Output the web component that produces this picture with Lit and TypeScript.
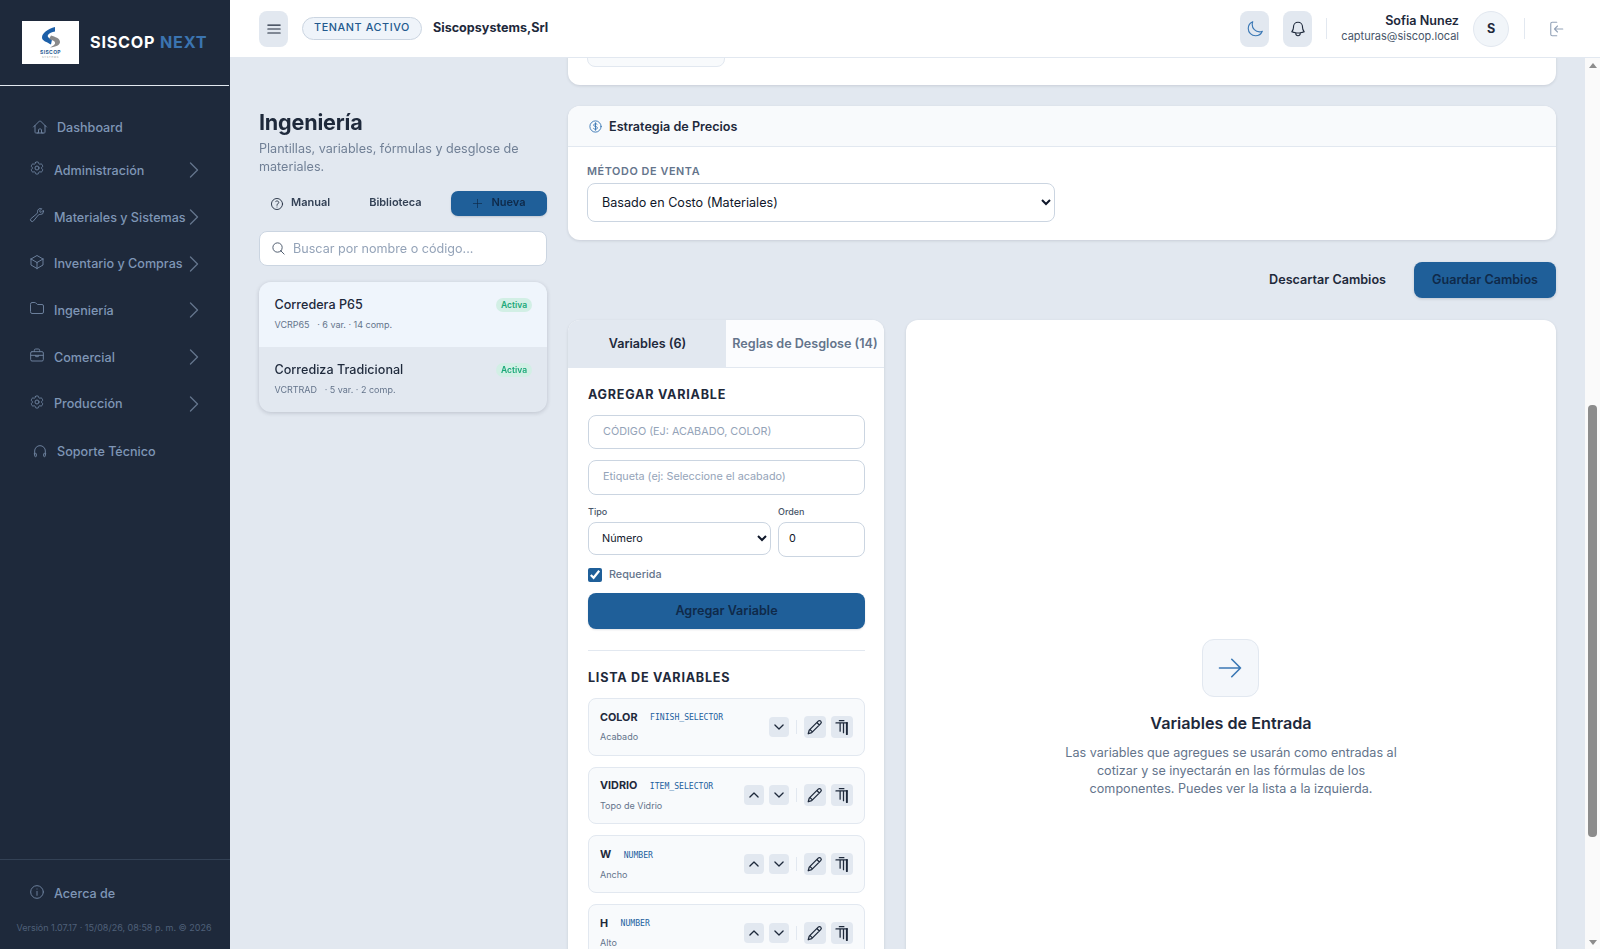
import { LitElement, html, css, svg } from "lit";
import { customElement } from "lit/decorators.js";

const ic = (d: unknown, cls = "") => html`<svg class=${cls} viewBox="0 0 24 24" fill="none" stroke="currentColor" stroke-width="1.5" stroke-linecap="round" stroke-linejoin="round">${d}</svg>`;
const P = {
  home: svg`<path d="M2.25 12l8.954-8.955c.44-.439 1.152-.439 1.591 0L21.75 12M4.5 9.75v10.125c0 .621.504 1.125 1.125 1.125H9.75v-4.875c0-.621.504-1.125 1.125-1.125h2.25c.621 0 1.125.504 1.125 1.125V21h4.125c.621 0 1.125-.504 1.125-1.125V9.75M8.25 21h8.25"/>`,
  cog: svg`<path d="M9.594 3.94c.09-.542.56-.94 1.11-.94h2.593c.55 0 1.02.398 1.11.94l.213 1.281c.063.374.313.686.645.87.074.04.147.083.22.127.324.196.72.257 1.075.124l1.217-.456a1.125 1.125 0 011.37.49l1.296 2.247a1.125 1.125 0 01-.26 1.431l-1.003.827c-.293.24-.438.613-.431.992a6.759 6.759 0 010 .255c-.007.378.138.75.43.99l1.005.828c.424.35.534.954.26 1.43l-1.298 2.247a1.125 1.125 0 01-1.369.491l-1.217-.456c-.355-.133-.75-.072-1.076.124a6.57 6.57 0 01-.22.128c-.331.183-.581.495-.644.869l-.213 1.28c-.09.543-.56.941-1.11.941h-2.594c-.55 0-1.02-.398-1.11-.94l-.213-1.281c-.062-.374-.312-.686-.644-.87a6.52 6.52 0 01-.22-.127c-.325-.196-.72-.257-1.076-.124l-1.217.456a1.125 1.125 0 01-1.369-.49l-1.297-2.247a1.125 1.125 0 01.26-1.431l1.004-.827c.292-.24.437-.613.43-.992a6.932 6.932 0 010-.255c.007-.378-.138-.75-.43-.99l-1.004-.828a1.125 1.125 0 01-.26-1.43l1.297-2.247a1.125 1.125 0 011.37-.491l1.216.456c.356.133.751.072 1.076-.124.072-.044.146-.087.22-.128.332-.183.582-.495.644-.869l.214-1.281z"/><path d="M15 12a3 3 0 11-6 0 3 3 0 016 0z"/>`,
  wrench: svg`<path d="M21.75 6.75a4.5 4.5 0 01-4.884 4.484c-1.076-.091-2.264.071-2.95.904l-7.152 8.684a2.548 2.548 0 11-3.586-3.586l8.684-7.152c.833-.686.995-1.874.904-2.95a4.5 4.5 0 016.336-4.486l-3.276 3.276a3.004 3.004 0 002.25 2.25l3.276-3.276c.256.565.398 1.192.398 1.852z"/>`,
  cube: svg`<path d="M21 7.5l-9-5.25L3 7.5m18 0l-9 5.25m9-5.25v9l-9 5.25M3 7.5l9 5.25M3 7.5v9l9 5.25m0-9v9"/>`,
  folder: svg`<path d="M2.25 6A2.25 2.25 0 014.5 3.75h4.38a1.5 1.5 0 011.06.44l2.12 2.12a1.5 1.5 0 001.06.44h6.38a2.25 2.25 0 012.25 2.25v9a2.25 2.25 0 01-2.25 2.25h-15A2.25 2.25 0 012.25 18z"/>`,
  brief: svg`<rect x="2.5" y="7" width="19" height="14" rx="2"/><path d="M8 7V5a2 2 0 012-2h4a2 2 0 012 2v2M2.5 12.5h19M10 12.5v2h4v-2"/>`,
  head: svg`<path d="M4 18v-6a8 8 0 0116 0v6"/><path d="M4 15.5h1.5a1 1 0 011 1v3a1 1 0 01-1 1H5a1 1 0 01-1-1zM20 15.5h-1.5a1 1 0 00-1 1v3a1 1 0 001 1h.5a1 1 0 001-1z"/>`,
  info: svg`<circle cx="12" cy="12" r="9.5"/><path d="M12 17v-6M12 7.5h.01"/>`,
  moon: svg`<path d="M21.752 15.002A9.718 9.718 0 0118 15.75c-5.385 0-9.75-4.365-9.75-9.75 0-1.33.266-2.597.748-3.752A9.753 9.753 0 003 11.25C3 16.635 7.365 21 12.75 21a9.753 9.753 0 009.002-5.998z"/>`,
  bell: svg`<path d="M14.857 17.082a23.848 23.848 0 005.454-1.31A8.967 8.967 0 0118 9.75V9A6 6 0 006 9v.75a8.967 8.967 0 01-2.312 6.022c1.733.64 3.56 1.085 5.455 1.31m5.714 0a24.255 24.255 0 01-5.714 0m5.714 0a3 3 0 11-5.714 0"/>`,
  logout: svg`<path d="M13 3H7a2 2 0 00-2 2v14a2 2 0 002 2h6M21 12H10M14 8l-4 4 4 4"/>`,
  help: svg`<circle cx="12" cy="12" r="9.5"/><path d="M9.879 7.519c1.171-1.025 3.071-1.025 4.242 0 1.172 1.025 1.172 2.687 0 3.712-.203.179-.43.326-.67.442-.745.361-1.45.999-1.45 1.827v.75M12 17.25h.008"/>`,
  search: svg`<path d="M21 21l-5.197-5.197m0 0A7.5 7.5 0 105.196 5.196a7.5 7.5 0 0010.607 10.607z"/>`,
  plus: svg`<path d="M12 3v18M3 12h18"/>`,
  dollar: svg`<path d="M12 6v12m-3-2.818l.879.659c1.171.879 3.07.879 4.242 0 1.172-.879 1.172-2.303 0-3.182C13.536 12.219 12.768 12 12 12c-.725 0-1.45-.22-2.003-.659-1.106-.879-1.106-2.303 0-3.182s2.9-.879 4.006 0l.415.33M21 12a9 9 0 11-18 0 9 9 0 0118 0z"/>`,
  menu: svg`<path d="M3.75 6.75h16.5M3.75 12h16.5M3.75 17.25h16.5"/>`,
  arrow: svg`<path d="M13.5 4.5L21 12m0 0l-7.5 7.5M21 12H3"/>`,
  up: svg`<path d="M5 15.5l7-7 7 7"/>`,
  down: svg`<path d="M5 8.5l7 7 7-7"/>`,
  pencil: svg`<path d="M16.3 4.2a2.3 2.3 0 013.3 3.3L7.6 19.5 3 21l1.3-4.8zM14.5 6l3.3 3.3M5.500 15.5l3 3"/>`,
  trash: svg`<path d="M4 6.5h15M8.5 3.5h6M9.500 6.5v11M14 6.5v13"/><path d="M18.5 6.5v15" stroke-width="2.6"/>`,
};

const groups = [
  ["Administración", P.cog],
  ["Materiales y Sistemas", P.wrench],
  ["Inventario y Compras", P.cube],
  ["Ingeniería", P.folder],
  ["Comercial", P.brief],
  ["Producción", P.cog],
];

const vars = [
  { n: "COLOR", t: "FINISH_SELECTOR", l: "Acabado", first: true },
  { n: "VIDRIO", t: "ITEM_SELECTOR", l: "Topo de Vidrio" },
  { n: "W", t: "NUMBER", l: "Ancho" },
  { n: "H", t: "NUMBER", l: "Alto" },
];

@customElement("app-root")
export class AppRoot extends LitElement {
  static styles = css`
    :host { display: flex; height: 100vh; overflow: hidden; font-family: Inter, "Noto Sans", sans-serif; color: #1e293b; background: #e2e8f0; }
    * { box-sizing: border-box; }
    svg { display: block; flex: none; }
    button { font-family: inherit; border: 0; cursor: pointer; padding: 0; }
    input, select { font-family: inherit; }

    .side { width: 230px; flex: none; background: #1e293b; display: flex; flex-direction: column; color: #7f96b6; }
    .brand { height: 86px; flex: none; border-bottom: 1px solid #e2e8f0; display: flex; align-items: center; gap: 11px; padding: 0 0 1px 22px; margin-right: 1px; }
    .logo { width: 57px; height: 43px; background: #fff; }
    .bname { font-size: 16.2px; font-weight: 700; letter-spacing: .78px; color: #fff; white-space: nowrap; }
    .bname span { color: #3b74b0; }
    nav { padding-top: 21px; flex: 1; display: flex; flex-direction: column; }
    .link, .grp { display: flex; align-items: center; font-size: 12.6px; font-weight: 500; white-space: nowrap; }
    .link { height: 40px; padding-left: 32px; gap: 9px; }
    .link svg { width: 16px; height: 16px; color: #6b7f9b; }
    .link.sup { margin-top: 4px; }
    .grp { height: 46.7px; padding-left: 28.500px; }
    .grp > svg:first-child { width: 16px; height: 16px; color: #6b7f9b; margin: 0 9.500px 4px 0; }
    .grp .lbl { width: 135px; }
    .chev { width: 10px; height: 16px; color: #64748b; }
    .foot { border-top: 1px solid #334155; height: 90px; flex: none; display: flex; flex-direction: column; }
    .foot .grp { height: 33px; margin-top: 16.500px; }
    .foot .grp > svg:first-child { margin-bottom: 2px; }
    .ver { font-size: 9px; color: #4f6079; padding: 12px 0 0 16.500px; white-space: nowrap; }

    .right { flex: 1; min-width: 0; display: flex; flex-direction: column; position: relative; }
    .top { height: 58px; flex: none; background: #fff; border-bottom: 1px solid #e2e8f0; display: flex; align-items: center; padding: 0 0 0 29px; }
    .tb { width: 29px; height: 36px; border-radius: 8px; background: #e2e8f0; display: flex; align-items: center; justify-content: center; color: #1e293b; }
    .tb svg { width: 18px; height: 18px; }
    .tb.moon { color: #3b78b5; margin-left: auto; }
    .tb.bell { margin-left: 14px; }
    .badge { margin-left: 14px; width: 120px; height: 23px; padding-bottom: 2px; border-radius: 12px; border: 1px solid #cbd5e1; background: #eff4fa; color: #22598e; font-size: 10.8px; font-weight: 500; letter-spacing: .6px; display: flex; align-items: center; justify-content: center; }
    .tenant { margin-left: 11px; padding-bottom: 2px; font-size: 12.6px; font-weight: 700; }
    .vd { width: 1px; height: 21px; background: #e2e8f0; }
    .vd.a { margin-left: 14px; }
    .user { width: 132px; padding-bottom: 1px; text-align: right; }
    .user b { display: block; font-size: 12.6px; font-weight: 600; line-height: 16px; }
    .user span { display: block; margin-top: -1px; font-size: 11px; color: #475569; line-height: 16px; }
    .ava { margin-left: 14px; width: 36px; height: 36px; border-radius: 50%; background: #f1f5f9; border: 1px solid #e2e8f0; font-size: 12.6px; font-weight: 700; display: flex; align-items: center; justify-content: center; }
    .vd.b { margin-left: 15px; }
    .out { margin-left: 22px; margin-right: 35px; color: #94a3b8; width: 18px; height: 18px; }
    .out svg { width: 18px; height: 18px; }

    .main { flex: 1; min-height: 0; overflow-y: scroll; scrollbar-width: none; padding: 24px 29px 35px; display: grid; grid-template-columns: 288px 988px; gap: 21px; align-items: start; }

    .sb { position: absolute; top: 58px; right: 0; bottom: 0; width: 15px; background: #fafafa; display: flex; flex-direction: column; align-items: center; }
    .tri { height: 14px; flex: none; display: flex; align-items: center; justify-content: center; }
    .tri i { display: block; width: 0; height: 0; border-left: 4.500px solid transparent; border-right: 4.500px solid transparent; }
    .tri.u i { border-bottom: 5px solid #8c8c8c; }
    .tri.d i { border-top: 5px solid #8c8c8c; }
    .sgap { height: 333px; flex: none; }
    .thumb { width: 9px; height: 432px; flex: none; background: #8c8c8c; border-radius: 4px; }
    .sfill { flex: 1; }

    .left { position: sticky; top: 24px; }
    h1 { margin: 0; font-size: 21.6px; font-weight: 700; line-height: 33px; letter-spacing: -.2px; }
    .sub { margin: 1px 0 0; font-size: 12.6px; line-height: 18px; color: #718096; }
    .acts { margin-top: 15px; display: flex; align-items: center; gap: 16px; height: 25px; }
    .ghost { background: none; font-size: 11px; font-weight: 600; color: #334155; padding: 0 12px 4px 11px; height: 25px; display: flex; align-items: center; gap: 7px; }
    .ghost svg { width: 14px; height: 14px; color: #1e293b; margin-top: 4px; }
    .nueva { margin-left: auto; width: 96px; height: 25px; padding-bottom: 3px; border-radius: 7px; background: #1f5f99; color: #0f2a4a; font-size: 11px; font-weight: 600; display: flex; align-items: center; justify-content: center; gap: 8px; box-shadow: 0 1px 2px rgba(15,23,42,.15); }
    .nueva svg { width: 11px; height: 11px; color: #0f2a4a; margin-top: 3px; }
    .search { margin-top: 15px; height: 35px; border: 1px solid #cbd5e1; border-radius: 8px; background: #fff; display: flex; align-items: center; padding: 0 11px; gap: 7px; color: #475569; }
    .search svg { width: 15px; height: 15px; }
    .search input { border: 0; outline: 0; flex: 1; min-width: 0; font-size: 12.6px; padding: 0; background: transparent; }
    input::placeholder { color: #94a3b8; opacity: 1; }
    .list { margin-top: 16px; border-radius: 12px; overflow: hidden; box-shadow: 0 1px 4px rgba(15,23,42,.18); }
    .row { height: 65px; padding: 14px 15px 0 15.500px; position: relative; }
    .row.on { background: #eff5fc; }
    .row b { display: block; font-size: 12.6px; font-weight: 500; line-height: 17px; color: #1e293b; }
    .row span.m { display: block; margin-top: 5px; font-size: 9px; line-height: 13px; color: #64748b; }
    .pill { position: absolute; right: 15px; top: 16px; height: 14px; width: 36px; border-radius: 7px; background: #d2efe5; color: #1aa878; font-size: 8.5px; font-weight: 600; display: flex; align-items: center; justify-content: center; }

    .col { min-width: 0; display: flex; flex-direction: column; }
    .card { background: #fff; border-radius: 12px; box-shadow: 0 1px 3px rgba(15,23,42,.12); }
    .c0 { height: 694px; display: flex; align-items: flex-end; padding: 0 19px 18px; }
    .c0 div { width: 138px; height: 32px; border: 1px solid #e2e8f0; border-radius: 8px; background: #f8fafc; }
    .c1 { margin-top: 21px; height: 134px; overflow: hidden; }
    .ch { height: 41px; background: #f8fafc; border-bottom: 1px solid #e2e8f0; display: flex; align-items: center; gap: 6.500px; padding: 0 19px 0 19.500px; font-size: 12.6px; font-weight: 600; }
    .ch svg { width: 15px; height: 15px; color: #3b78b5; }
    .cb { padding: 18px 19px 0; }
    .cap { font-size: 10.8px; font-weight: 600; line-height: 14px; letter-spacing: .6px; color: #64748b; }
    .sel { display: block; margin-top: 4px; width: 468px; height: 39px; border: 1px solid #cbd5e1; border-radius: 8px; background: #fff; font-size: 12.6px; color: #0f172a; padding: 0 10px 1px; }
    .save { margin-top: 22px; height: 36px; display: flex; align-items: center; justify-content: flex-end; gap: 28px; }
    .disc { background: none; font-size: 12.6px; font-weight: 600; color: #1e293b; padding-bottom: 2px; }
    .guard { width: 142px; height: 36px; padding-bottom: 2px; border-radius: 8px; background: #1f5f99; color: #0f2a4a; font-size: 12.6px; font-weight: 600; box-shadow: 0 1px 3px rgba(15,23,42,.15); }
    .split { margin-top: 22px; display: grid; grid-template-columns: 316px 650px; gap: 22px; }
    .panel { min-height: 796px; border-radius: 12px; background: #fff; box-shadow: 0 1px 3px rgba(15,23,42,.12); overflow: hidden; }
    .tabs { display: grid; grid-template-columns: 158px 158px; height: 48px; }
    .tabs div { display: flex; align-items: center; justify-content: center; font-size: 12.6px; font-weight: 600; white-space: nowrap; padding-bottom: 1px; }
    .tabs .a { background: #e2e8f0; padding-left: 1px; }
    .tabs .b { background: #fbfcfe; color: #64748b; border-bottom: 1px solid #e2e8f0; }
    .form { padding: 19px 19px 0 20px; }
    h3 { margin: 0; font-size: 12.6px; font-weight: 700; letter-spacing: .75px; line-height: 16px; color: #1e293b; }
    .in { display: block; width: 277px; height: 34px; border: 1px solid #cbd5e1; border-radius: 8px; background: #fff; font-size: 10.8px; padding: 0 14px 2px; }
    .form .in:nth-of-type(1) { margin-top: 12px; }
    .in.t { margin-top: 11px; height: 35px; }
    .two { margin-top: 10px; display: grid; grid-template-columns: 183px 87px; gap: 7px; }
    .two label { display: block; font-size: 9px; font-weight: 500; line-height: 14px; color: #475569; }
    .two select { display: block; margin-top: 3px; width: 100%; height: 33px; border: 1px solid #cbd5e1; border-radius: 8px; background: #fff; font-size: 10.8px; color: #0f172a; padding: 0 9px 1px; }
    .two input { display: block; margin-top: 3px; width: 100%; height: 35px; border: 1px solid #cbd5e1; border-radius: 8px; background: #fff; font-size: 10.8px; color: #0f172a; padding: 0 10px 3px; }
    .chk { margin-top: 10px; display: flex; align-items: center; gap: 7px; height: 16px; font-size: 10.8px; font-weight: 500; color: #64748b; }
    .chk span { padding-bottom: 2px; }
    .chk input { margin: 0; width: 14px; height: 14px; accent-color: #1f5f99; }
    .add { display: block; margin-top: 10px; width: 277px; height: 36px; padding-bottom: 2px; border-radius: 8px; background: #1f5f99; color: #0f2a4a; font-size: 12.6px; font-weight: 600; box-shadow: 0 1px 2px rgba(15,23,42,.12); }
    hr { margin: 21px 0 0; width: 277px; height: 1px; border: 0; background: #e2e8f0; }
    h3.l { margin-top: 19px; }
    .vars { margin-top: 12px; width: 277px; display: flex; flex-direction: column; gap: 11px; }
    .v { height: 57.67px; border: 1px solid #e2e8f0; border-radius: 8px; background: #f8fafc; display: flex; align-items: center; padding: 0 11px; }
    .vi { flex: 1; min-width: 0; }
    .vn { display: flex; align-items: center; gap: 12.500px; height: 16px; font-size: 10.8px; font-weight: 700; color: #1e293b; }
    .vn code { font-family: "DejaVu Sans Mono", monospace; font-size: 8.1px; font-weight: 400; color: #22609e; }
    .vl { margin-top: 5px; font-size: 9px; line-height: 14px; color: #64748b; }
    .va { display: flex; align-items: center; }
    .sm { width: 20px; height: 20px; border-radius: 4px; background: #e2e8f0; color: #1e293b; display: flex; align-items: center; justify-content: center; margin-left: 5px; }
    .sm svg { width: 14px; height: 14px; stroke-width: 2.200; }
    .sep { width: 1px; height: 14px; background: #e2e8f0; margin: 0 7px; }
    .bg { width: 22px; height: 22px; border-radius: 4px; background: #e2e8f0; color: #1e293b; display: flex; align-items: center; justify-content: center; margin-left: 5px; }
    .sep + .bg { margin-left: 0; }
    .bg svg { width: 18px; height: 18px; stroke-width: 1.7; }
    .empty { display: flex; flex-direction: column; align-items: center; justify-content: center; text-align: center; }
    .ebox { width: 57px; height: 58px; margin-right: 2px; border-radius: 12px; background: #f4f7fb; border: 1px solid #e2e8f0; color: #3b78b5; display: flex; align-items: center; justify-content: center; }
    .ebox svg { width: 28px; height: 28px; stroke-width: 1.4; }
    .empty h2 { margin: 14px 0 0; font-size: 16.2px; font-weight: 600; line-height: 24px; }
    .empty p { margin: 9px 0 0; width: 345px; font-size: 12.6px; line-height: 18px; color: #64748b; }
  `;

  firstUpdated() {
    const m = this.renderRoot.querySelector(".main") as HTMLElement;
    m.scrollTop = 691;
  }

  render() {
    const chev = html`<svg class="chev" viewBox="0 0 10 16" fill="none" stroke="currentColor" stroke-width="1.4" stroke-linecap="round" stroke-linejoin="round"><path d="M1.5 1l7 7-7 7"/></svg>`;
    return html`
      <aside class="side">
        <div class="brand">
          <svg class="logo" viewBox="0 0 57 43">
            <rect width="57" height="43" fill="#fff"/>
            <path d="M33 6C26 8 20 12 20 16.500C20 20 25 21 29 23.500L30 18.500C27 17 25 16 26 14C27 12 30 11 33 10.500Z" fill="#1c5fa8"/>
            <path d="M29 14.500C33 16 38 17 38 21C38 24 34 26 28 26.500C31 25 33.500 23.500 33 21.500C32.500 19.500 30 19 27 18Z" fill="#8a8a8a"/>
            <text x="28.500" y="33" text-anchor="middle" font-family="Inter, sans-serif" font-size="5" font-weight="700" letter-spacing=".35" fill="#2a5b92">SISCOP</text>
            <text x="28.500" y="36.500" text-anchor="middle" font-family="Inter, sans-serif" font-size="2.600" letter-spacing=".7" fill="#9a9a9a">SYSTEMS</text>
          </svg>
          <div class="bname">SISCOP <span>NEXT</span></div>
        </div>
        <nav>
          <div class="link">${ic(P.home)}<span>Dashboard</span></div>
          ${groups.map(([t, p]) => html`<div class="grp">${ic(p)}<span class="lbl">${t}</span>${chev}</div>`)}
          <div class="link sup">${ic(P.head)}<span>Soporte Técnico</span></div>
        </nav>
        <div class="foot">
          <div class="grp">${ic(P.info)}<span>Acerca de</span></div>
          <div class="ver">Versión 1.07.17 · 15/08/26, 08:58 p. m. © 2026</div>
        </div>
      </aside>
      <div class="right">
        <header class="top">
          <button class="tb">${ic(P.menu)}</button>
          <div class="badge">TENANT ACTIVO</div>
          <div class="tenant">Siscopsystems,Srl</div>
          <button class="tb moon">${ic(P.moon)}</button>
          <button class="tb bell">${ic(P.bell)}</button>
          <div class="vd a"></div>
          <div class="user"><b>Sofia Nunez</b><span>capturas@siscop.local</span></div>
          <div class="ava">S</div>
          <div class="vd b"></div>
          <div class="out">${ic(P.logout)}</div>
        </header>
        <main class="main">
          <section class="left">
            <h1>Ingeniería</h1>
            <p class="sub">Plantillas, variables, fórmulas y desglose de materiales.</p>
            <div class="acts">
              <button class="ghost">${ic(P.help)}Manual</button>
              <button class="ghost">Biblioteca</button>
              <button class="nueva">${ic(P.plus)}Nueva</button>
            </div>
            <div class="search">${ic(P.search)}<input placeholder="Buscar por nombre o código..." /></div>
            <div class="list">
              <div class="row on"><b>Corredera P65</b><span class="m">VCRP65 &nbsp; · 6 var. · 14 comp.</span><span class="pill">Activa</span></div>
              <div class="row"><b>Corrediza Tradicional</b><span class="m">VCRTRAD &nbsp; · 5 var. · 2 comp.</span><span class="pill">Activa</span></div>
            </div>
          </section>
          <section class="col">
            <div class="card c0"><div></div></div>
            <div class="card c1">
              <div class="ch">${ic(P.dollar)}Estrategia de Precios</div>
              <div class="cb">
                <div class="cap">MÉTODO DE VENTA</div>
                <select class="sel"><option>Basado en Costo (Materiales)</option></select>
              </div>
            </div>
            <div class="save">
              <button class="disc">Descartar Cambios</button>
              <button class="guard">Guardar Cambios</button>
            </div>
            <div class="split">
              <div class="panel">
                <div class="tabs"><div class="a">Variables (6)</div><div class="b">Reglas de Desglose (14)</div></div>
                <div class="form">
                  <h3>AGREGAR VARIABLE</h3>
                  <input class="in" placeholder="CÓDIGO (EJ: ACABADO, COLOR)" />
                  <input class="in t" placeholder="Etiqueta (ej: Seleccione el acabado)" />
                  <div class="two">
                    <div><label>Tipo</label><select><option>Número</option></select></div>
                    <div><label>Orden</label><input type="number" value="0" /></div>
                  </div>
                  <label class="chk"><input type="checkbox" checked /><span>Requerida</span></label>
                  <button class="add">Agregar Variable</button>
                  <hr />
                  <h3 class="l">LISTA DE VARIABLES</h3>
                  <div class="vars">
                    ${vars.map((v) => html`
                      <div class="v">
                        <div class="vi">
                          <div class="vn"><span>${v.n}</span><code>${v.t}</code></div>
                          <div class="vl">${v.l}</div>
                        </div>
                        <div class="va">
                          ${v.first ? "" : html`<button class="sm">${ic(P.up)}</button>`}
                          <button class="sm">${ic(P.down)}</button>
                          <div class="sep"></div>
                          <button class="bg">${ic(P.pencil)}</button>
                          <button class="bg">${ic(P.trash)}</button>
                        </div>
                      </div>`)}
                  </div>
                </div>
              </div>
              <div class="panel empty">
                <div class="ebox">${ic(P.arrow)}</div>
                <h2>Variables de Entrada</h2>
                <p>Las variables que agregues se usarán como entradas al cotizar y se inyectarán en las fórmulas de los componentes. Puedes ver la lista a la izquierda.</p>
              </div>
            </div>
          </section>
        </main>
        <div class="sb" aria-hidden="true">
          <div class="tri u"><i></i></div>
          <div class="sgap"></div>
          <div class="thumb"></div>
          <div class="sfill"></div>
          <div class="tri d"><i></i></div>
        </div>
      </div>
    `;
  }
}
